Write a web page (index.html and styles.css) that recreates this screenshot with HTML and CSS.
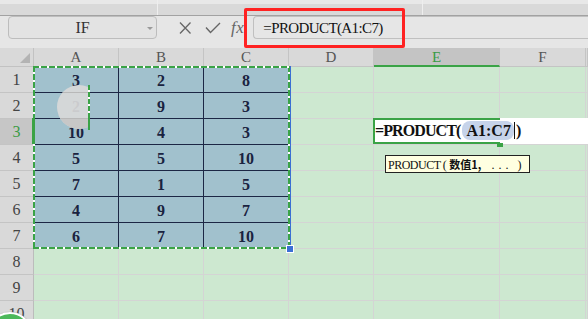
FILE: index.html
```html
<!DOCTYPE html>
<html>
<head>
<meta charset="utf-8">
<link rel="stylesheet" href="styles.css">
</head>
<body>
<div class="topbar"><i class="sep s1"></i><i class="sep s2"></i></div>
<div class="fbar">
  <div class="namebox"><span>IF</span><i class="dd"></i></div>
  <div class="icons">
    <svg class="ic" width="14" height="12" viewBox="0 0 14 12"><path d="M2 0.5 L12.5 11.5 M12.5 0.5 L2 11.5" stroke="#666" stroke-width="1.3" fill="none"/></svg>
    <svg class="ic" width="16" height="12" viewBox="0 0 16 12"><path d="M1 5.5 L5.5 10.5 L15 1" stroke="#666" stroke-width="1.4" fill="none"/></svg>
    <span class="fx">fx</span>
  </div>
  <div class="finput">=PRODUCT(A1:C7)</div>
</div>
<div class="sheet">
  <div class="corner"><i class="tri"></i></div><div class="ch">A</div><div class="ch">B</div><div class="ch">C</div><div class="ch">D</div><div class="ch sel">E</div><div class="ch">F</div><div class="ch"></div>
  <div class="rh">1</div><div class="c t">3</div><div class="c t">2</div><div class="c t">8</div><div class="c"></div><div class="c"></div><div class="c"></div><div class="c"></div>
  <div class="rh">2</div><div class="c t">2</div><div class="c t">9</div><div class="c t">3</div><div class="c"></div><div class="c"></div><div class="c"></div><div class="c"></div>
  <div class="rh sel">3</div><div class="c t">10</div><div class="c t">4</div><div class="c t">3</div><div class="c"></div><div class="c"></div><div class="c"></div><div class="c"></div>
  <div class="rh">4</div><div class="c t">5</div><div class="c t">5</div><div class="c t">10</div><div class="c"></div><div class="c"></div><div class="c"></div><div class="c"></div>
  <div class="rh">5</div><div class="c t">7</div><div class="c t">1</div><div class="c t">5</div><div class="c"></div><div class="c"></div><div class="c"></div><div class="c"></div>
  <div class="rh">6</div><div class="c t">4</div><div class="c t">9</div><div class="c t">7</div><div class="c"></div><div class="c"></div><div class="c"></div><div class="c"></div>
  <div class="rh">7</div><div class="c t">6</div><div class="c t">7</div><div class="c t">10</div><div class="c"></div><div class="c"></div><div class="c"></div><div class="c"></div>
  <div class="rh">8</div><div class="c"></div><div class="c"></div><div class="c"></div><div class="c"></div><div class="c"></div><div class="c"></div><div class="c"></div>
  <div class="rh">9</div><div class="c"></div><div class="c"></div><div class="c"></div><div class="c"></div><div class="c"></div><div class="c"></div><div class="c"></div>
  <div class="rh">10</div><div class="c"></div><div class="c"></div><div class="c"></div><div class="c"></div><div class="c"></div><div class="c"></div><div class="c"></div>

  <div class="ants"></div>
  <div class="blueline"></div>
  <div class="handle"></div>
  <div class="rowbar"></div>
  <div class="loupe"><div class="disc"><i class="ln l1"></i><i class="lsel"></i></div></div>
  <div class="gbar"></div>
  <div class="editor"><span class="etext">=PRODUCT(<span class="ref">A1:C7</span><i class="cur"></i>)</span></div>
  <div class="tip">PRODUCT (<b>数值1,</b><span class="dots">...</span>)</div>
</div>
<div class="redbox"></div>
<div class="touch"></div>
</body>
</html>
```
FILE: styles.css
```css
html, body {
  margin: 0;
  padding: 0;
}
body {
  width: 588px;
  height: 319px;
  overflow: hidden;
  position: relative;
  background: #e6e6e6;
  font-family: "Liberation Serif", "Noto Sans CJK SC", serif;
}
.topbar {
  height: 16px;
  box-sizing: border-box;
  border-bottom: 1px solid #a2a2a2;
  background: linear-gradient(#e8e8e8 0 4px, #d9d9d9 4px);
  position: relative;
}
.sep {
  position: absolute;
  top: 0;
  width: 1px;
  height: 15px;
  background: #eeeeee;
}
.s1 { left: 157px; }
.s2 { left: 422px; }
.fbar {
  height: 32px;
  display: flex;
  align-items: flex-start;
  background: #e6e6e6;
}
.namebox {
  margin-left: 8px;
  width: 149px;
  height: 23px;
  box-sizing: border-box;
  border: 1px solid #bdbdbd;
  border-radius: 4px;
  background: #e3e3e3;
  display: flex;
  align-items: center;
  justify-content: center;
  position: relative;
  font-size: 16px;
  color: #333;
}
.dd {
  position: absolute;
  right: 3px;
  top: 10px;
  border-left: 3px solid transparent;
  border-right: 3px solid transparent;
  border-top: 3px solid #9a9a9a;
}
.icons {
  display: flex;
  align-items: center;
  height: 23px;
  margin-left: 21px;
}
.ic { margin-right: 13px; }
.ic + .ic { margin-right: 10px; }
.fx {
  font-family: "Liberation Serif", serif;
  font-style: italic;
  font-size: 17px;
  color: #666;
  letter-spacing: 0.5px;
}
.finput {
  margin-left: 9px;
  flex: 1;
  height: 23px;
  box-sizing: border-box;
  border: 1px solid #c0c0c0;
  border-right: 0;
  border-radius: 4px 0 0 4px;
  background: #e6e6e6;
  padding-left: 9px;
  line-height: 22px;
  font-size: 15px;
  letter-spacing: -0.6px;
  color: #111;
}
.redbox {
  position: absolute;
  left: 244px;
  top: 8px;
  width: 161px;
  height: 40px;
  box-sizing: border-box;
  border: 3px solid #ff2222;
  border-radius: 2px;
}
.sheet {
  position: relative;
  display: grid;
  grid-template-columns: 34px 85px 85px 85px 85px 126px 86px 1fr;
  grid-template-rows: 19px repeat(10, 26px);
  background: #cde8d0;
}
.sheet > div.c, .sheet > div.ch, .sheet > div.rh, .sheet > div.corner {
  box-sizing: border-box;
  border-right: 1px solid #d4d4d4;
  border-bottom: 1px solid #d4d4d4;
}
.corner {
  background: #d9d9d9;
  position: relative;
  border-color: #c2c2c2 !important;
}
.tri {
  position: absolute;
  right: 3px;
  bottom: 3px;
  width: 0;
  height: 0;
  border-left: 10px solid transparent;
  border-bottom: 10px solid #b3b3b3;
}
.ch {
  background: #d9d9d9;
  border-color: #c4c4c4 !important;
  font-size: 15px;
  color: #555;
  text-align: center;
  line-height: 19px;
}
.ch.sel {
  background: #c4c4c4;
  color: #3a9b45;
  border-bottom: 2px solid #3aa346 !important;
}
.rh {
  background: #d9d9d9;
  border-color: #bcbcbc !important;
  border-bottom-color: #c4c4c4 !important;
  font-size: 16px;
  color: #444;
  text-align: center;
  line-height: 26px;
}
.rh.sel {
  background: #c6c6c6;
  color: #3a9b45;
}
.c.t {
  background: #a1c1cd;
  border-color: #1c2745 !important;
  font-family: "Liberation Serif", serif;
  font-weight: bold;
  font-size: 16px;
  color: #1a2340;
  text-align: center;
  line-height: 27px;
}
.ants {
  position: absolute;
  left: 33px;
  top: 18px;
  width: 257px;
  height: 183px;
  background:
    repeating-linear-gradient(90deg, #3aa346 0 6px, #ffffff 6px 8px) top left / 100% 2px no-repeat,
    repeating-linear-gradient(90deg, #3aa346 0 6px, #ffffff 6px 8px) bottom left / 100% 2px no-repeat,
    repeating-linear-gradient(180deg, #3aa346 0 6px, #ffffff 6px 8px) top left / 2px 100% no-repeat,
    repeating-linear-gradient(180deg, #3aa346 0 6px, #ffffff 6px 8px) top right / 2px 100% no-repeat;
}
.blueline {
  position: absolute;
  left: 290px;
  top: 18px;
  width: 1px;
  height: 180px;
  background: #3b6fd4;
}
.handle {
  position: absolute;
  left: 286px;
  top: 197px;
  width: 6px;
  height: 6px;
  background: #3b6fd4;
  border: 1px solid #fff;
}
.rowbar {
  position: absolute;
  left: 32px;
  top: 70px;
  width: 3px;
  height: 26px;
  background: #3aa346;
}
.loupe {
  position: absolute;
  left: 57px;
  top: 37px;
  width: 32px;
  height: 44px;
  overflow: hidden;
}
.disc {
  position: relative;
  width: 44px;
  height: 44px;
  border-radius: 50%;
  background: rgba(216, 216, 216, 0.93);
  overflow: hidden;
}
.ln {
  position: absolute;
  left: 0;
  right: 0;
  height: 1px;
  background: #b8b8b8;
}
.l1 { top: 7px; }
.lsel {
  position: absolute;
  left: 0;
  right: 0;
  top: 33px;
  bottom: 0;
  background: #c7c7c7;
  border-top: 1px solid #b8b8b8;
}
.gbar {
  position: absolute;
  left: 88px;
  top: 37px;
  width: 2px;
  height: 45px;
  background: repeating-linear-gradient(180deg, #3aa346 0 5px, #ffffff 5px 7px) top / 2px 30px no-repeat, #3aa346;
}
.editor {
  position: absolute;
  left: 373px;
  top: 70px;
  width: 215px;
  height: 26px;
  background: #fff;
}
.editor::before {
  content: "";
  position: absolute;
  left: 0;
  top: 0;
  width: 127px;
  height: 26px;
  box-sizing: border-box;
  border: 2px solid #3aa346;
  border-right: 0;
}
.editor::after {
  content: "";
  position: absolute;
  left: 124px;
  top: 25px;
  width: 6px;
  height: 4px;
  background: #3aa346;
}
.etext {
  position: absolute;
  left: 2px;
  top: 0;
  line-height: 26px;
  font-family: "Liberation Serif", serif;
  font-weight: bold;
  font-size: 16px;
  letter-spacing: -0.9px;
  color: #111;
  white-space: nowrap;
}
.ref {
  background: #c6d3ea;
  border-radius: 8px;
  padding: 1px 3px 1px 4px;
  margin-left: 2px;
  letter-spacing: 0;
}
.cur {
  display: inline-block;
  width: 1px;
  height: 17px;
  background: #111;
  vertical-align: -3px;
  margin-right: 1px;
}
.tip {
  position: absolute;
  left: 385px;
  top: 107px;
  width: 145px;
  height: 18px;
  box-sizing: border-box;
  border: 1px solid #222;
  background: #ffffe1;
  font-size: 12px;
  letter-spacing: -0.5px;
  line-height: 16px;
  padding-left: 2px;
  color: #111;
  white-space: nowrap;
}
.tip b {
  font-family: "Noto Sans CJK SC", sans-serif;
  font-weight: bold;
  font-size: 11px;
  letter-spacing: 0;
  margin-left: 3px;
}
.dots {
  letter-spacing: 4px;
  margin-left: 10px;
  margin-right: 5px;
}
.touch {
  position: absolute;
  left: -12px;
  top: 312px;
  width: 44px;
  height: 44px;
  box-sizing: border-box;
  border-radius: 50%;
  border: 2px solid #fff;
  background: #4cb85a;
  box-shadow: 0 0 1px #777;
}
```
